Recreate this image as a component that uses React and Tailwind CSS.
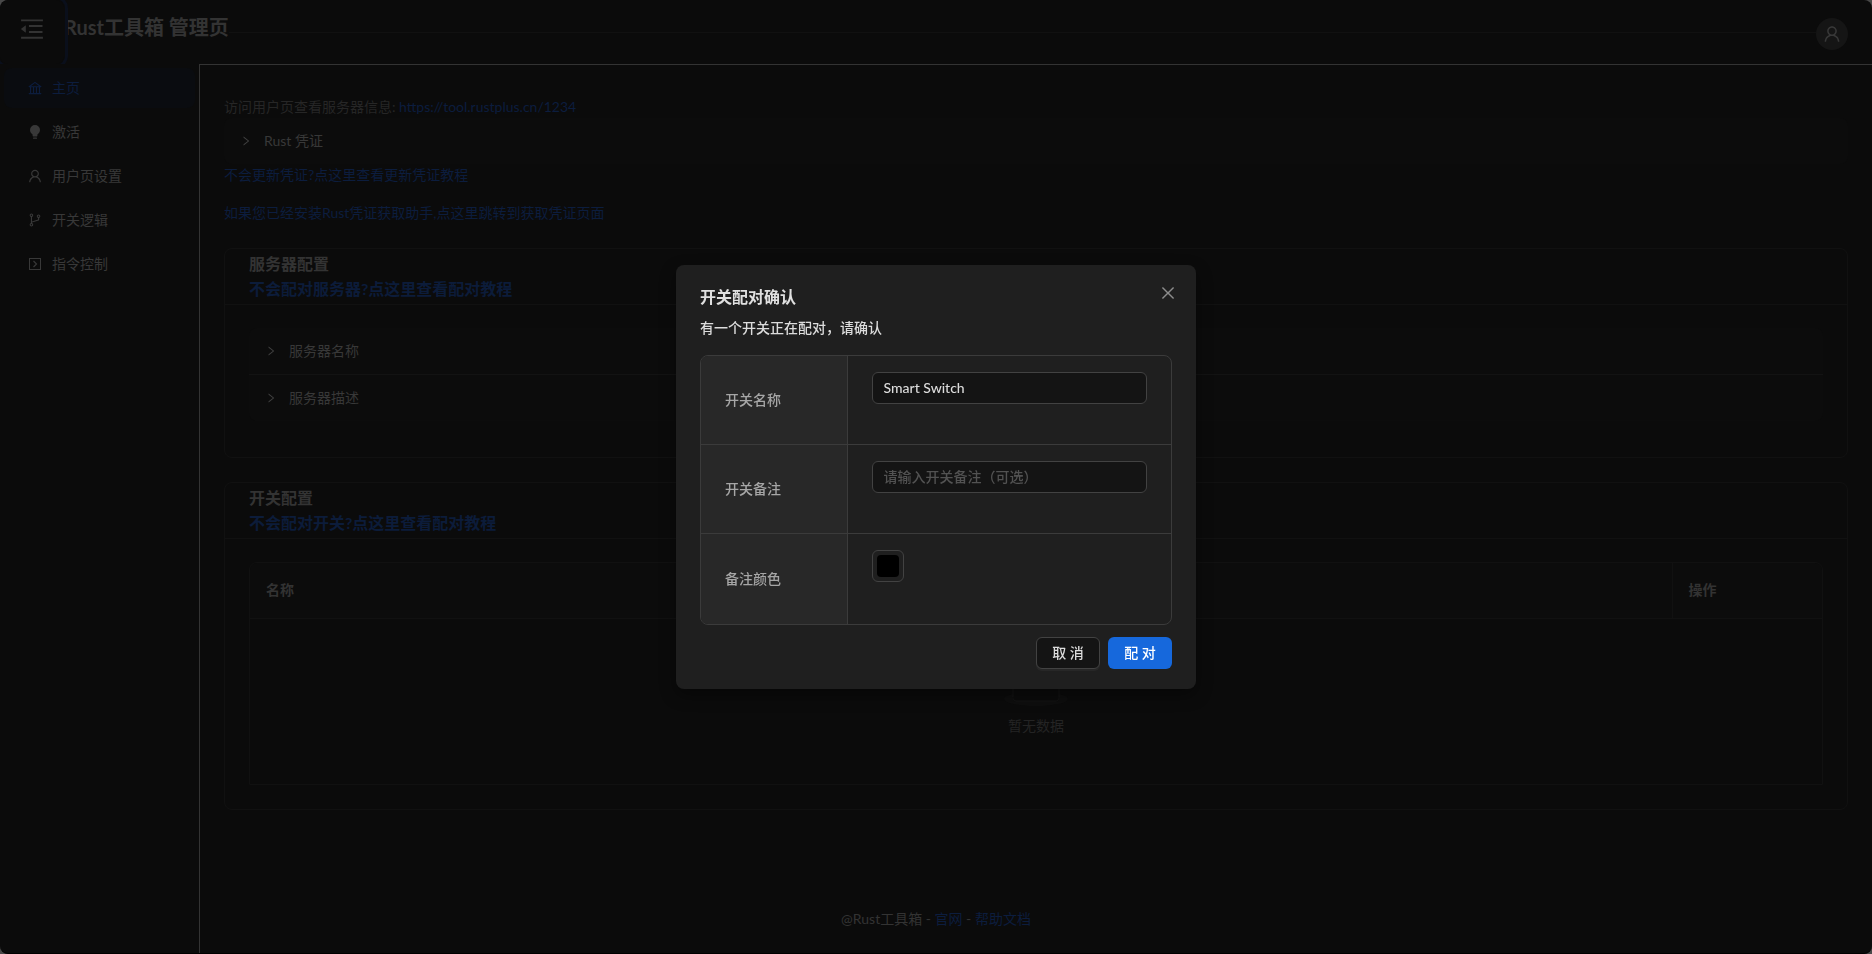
import React, { useState } from "react";
import { AiOutlineMenuFold, AiOutlineBank, AiOutlineUser, AiOutlineBranches, AiOutlineRight, AiOutlineClose } from "react-icons/ai";

const menuItems = [
  { key: "home", label: "主页", icon: <AiOutlineBank size={16} /> },
  { key: "active", label: "激活", icon: <BulbIcon /> },
  { key: "user", label: "用户页设置", icon: <AiOutlineUser size={16} /> },
  { key: "switch", label: "开关逻辑", icon: <AiOutlineBranches size={16} /> },
  { key: "command", label: "指令控制", icon: <CodeIcon /> },
];

function BulbIcon() {
  return (
    <svg width="16" height="16" viewBox="-1 -1 16 16" fill="currentColor">
      <path d="M7 0a5 5 0 0 0-5 5c0 1.900 1 3.400 2.600 4.400V11c0 .3.200.5.500.5h3.800c.3 0 .5-.2.500-.5V9.400C11 8.400 12 6.900 12 5a5 5 0 0 0-5-5z" />
      <rect x="5" y="12.600" width="4" height="1.200" rx=".5" />
    </svg>
  );
}

function CodeIcon() {
  return (
    <svg width="16" height="16" viewBox="0 0 16 16" fill="none" stroke="currentColor">
      <rect x="2.500" y="2.500" width="11" height="11" />
      <path d="M6.500 5 9.500 8l-3 3" strokeWidth="1.200" />
    </svg>
  );
}

function CollapseRow({ label }) {
  return (
    <button type="button" className="flex w-full items-center gap-3 px-4 py-3 text-left leading-[22px] text-[#383838]">
      <AiOutlineRight size={12} className="text-[#404040]" />
      <span>{label}</span>
    </button>
  );
}

function Card({ title, link, children, bodyClass }) {
  return (
    <section className="rounded-lg border border-[#111111]">
      <div className="-mb-px border-b border-[#111111] px-6 pt-[2px] pb-[3px] text-base leading-[25px] font-bold">
        <h2 className="text-[#333333]">{title}</h2>
        <a href="#" className="text-[#0c1c3a]">{link}</a>
      </div>
      <div className={bodyClass}>{children}</div>
    </section>
  );
}

function PairModal() {
  const [name, setName] = useState("Smart Switch");
  const [remark, setRemark] = useState("");
  const [color, setColor] = useState("#000000");

  const inputClass =
    "block h-8 w-full rounded-md border border-[#424242] bg-[#141414] px-[11px] pb-px text-[#dcdcdc] outline-none placeholder:text-[#525252]";
  const thClass = "w-[146px] border-r border-[#3b3b3b] bg-[#282828] px-6 text-left font-medium text-[#a6a6a6]";
  const tdClass = "px-6 py-4 align-top";

  return (
    <div className="fixed inset-0 flex items-center justify-center">
      <div role="dialog" aria-labelledby="pair-title" className="relative w-[520px] rounded-lg bg-[#1f1f1f] px-6 py-5 font-medium shadow-[0_6px_16px_rgba(0,0,0,0.4)]">
        <button type="button" aria-label="关闭" className="absolute top-[17px] right-[17px] flex size-[22px] items-center justify-center text-[#8c8c8c]">
          <AiOutlineClose size={18} />
        </button>
        <h2 id="pair-title" className="text-base leading-6 font-bold text-[#e0e0e0]">开关配对确认</h2>
        <p className="mt-2 leading-[22px] text-[#dcdcdc]">有一个开关正在配对，请确认</p>

        <div className="mt-4 overflow-hidden rounded-lg border border-[#3b3b3b]">
          <table className="w-full border-collapse">
            <tbody>
              <tr className="h-[88px] border-b border-[#3b3b3b]">
                <th className={thClass}><label htmlFor="switch-name">开关名称</label></th>
                <td className={tdClass}>
                  <input id="switch-name" className={inputClass} value={name} onChange={(e) => setName(e.target.value)} />
                </td>
              </tr>
              <tr className="h-[89px] border-b border-[#3b3b3b]">
                <th className={thClass}><label htmlFor="switch-remark">开关备注</label></th>
                <td className={tdClass}>
                  <input
                    id="switch-remark"
                    className={inputClass}
                    placeholder="请输入开关备注（可选）"
                    value={remark}
                    onChange={(e) => setRemark(e.target.value)}
                  />
                </td>
              </tr>
              <tr className="h-[91px]">
                <th className={thClass}><label htmlFor="switch-color">备注颜色</label></th>
                <td className={tdClass}>
                  <div className="size-8 rounded-md border border-[#424242] p-1">
                    <input
                      id="switch-color"
                      type="color"
                      value={color}
                      onChange={(e) => setColor(e.target.value)}
                      className="block size-full appearance-none overflow-hidden rounded bg-black p-0 [&::-webkit-color-swatch]:border-0 [&::-webkit-color-swatch-wrapper]:p-0"
                    />
                  </div>
                </td>
              </tr>
            </tbody>
          </table>
        </div>

        <div className="mt-3 flex justify-end gap-2">
          <button type="button" className="h-8 w-16 rounded-md border border-[#424242] bg-[#141414] text-[#dcdcdc] shadow-[0_2px_0_rgba(255,255,255,0.04)]">取 消</button>
          <button type="button" className="h-8 w-16 rounded-md bg-[#1668dc] text-white">配 对</button>
        </div>
      </div>
    </div>
  );
}

export default function App() {
  return (
    <div className="bg-[#484848] font-['Lato','Noto_Sans_CJK_SC',sans-serif] text-sm">
      <div className="flex min-h-screen flex-col rounded-lg border-b border-black bg-[#0b0b0b]">
        <header className="flex h-16 overflow-hidden rounded-tl-lg">
          <button
            type="button"
            aria-label="收起菜单"
            className="relative flex size-16 shrink-0 items-center justify-center rounded-lg bg-[#0b0b0b] pb-1.5 text-[#333333] outline-3 outline-offset-1 outline-[#0a0f1b]"
          >
            <AiOutlineMenuFold size={28} />
          </button>
          <div className="flex h-16 min-w-0 flex-1 items-center pr-6">
            <h1 className="pb-2.5 text-xl leading-7 font-bold text-[#333333]">Rust工具箱 管理页</h1>
            <div className="h-px flex-1 bg-[#111111]" />
            <button type="button" aria-label="用户" className="mt-1 flex size-8 items-center justify-center rounded-full bg-[#151515] text-[#383838]">
              <AiOutlineUser size={20} />
            </button>
          </div>
        </header>

        <div className="flex flex-1">
          <nav className="flex w-[199px] shrink-0 flex-col gap-1 p-1">
            {menuItems.map((item, i) => (
              <a
                key={item.key}
                href="#"
                className={
                  i === 0
                    ? "flex h-10 items-center gap-[9px] rounded-lg bg-[#0a0c10] pl-[23px] text-[#0c1d3e]"
                    : "flex h-10 items-center gap-[9px] rounded-lg pl-[23px] text-[#383838]"
                }
              >
                {item.icon}
                <span>{item.label}</span>
              </a>
            ))}
          </nav>

          <main className="flex min-w-0 flex-1 flex-col border-t border-l border-[#333333] px-6 pt-[31px]">
            <p className="leading-[22px] text-[#262626]">
              访问用户页查看服务器信息: <a href="#" className="text-[#0c1d3e]">https://tool.rustplus.cn/1234</a>
            </p>
            <div className="rounded-lg bg-[#0c0c0c]">
              <CollapseRow label="Rust 凭证" />
            </div>
            <a href="#" className="leading-[22px] text-[#0c1d3e]">不会更新凭证?点这里查看更新凭证教程</a>
            <a href="#" className="mt-4 leading-[22px] text-[#0c1d3e]">如果您已经安装Rust凭证获取助手,点这里跳转到获取凭证页面</a>

            <div className="mt-6 flex flex-col gap-6">
              <Card title="服务器配置" link="不会配对服务器?点这里查看配对教程" bodyClass="px-6 pt-6 pb-9">
                <div className="rounded-lg bg-[#0c0c0c]">
                  <CollapseRow label="服务器名称" />
                  <div className="h-px bg-[#131313]" />
                  <CollapseRow label="服务器描述" />
                </div>
              </Card>

              <Card title="开关配置" link="不会配对开关?点这里查看配对教程" bodyClass="p-6">
                <div className="overflow-hidden rounded-t-lg border border-[#111111]">
                  <table className="w-full border-collapse">
                    <thead>
                      <tr className="h-[55px] border-b border-[#111111] bg-[#0c0c0c] text-left text-[#333333]">
                        <th className="border-r border-[#111111] px-4 font-bold">名称</th>
                        <th className="w-[150px] px-4 font-bold">操作</th>
                      </tr>
                    </thead>
                    <tbody>
                      <tr>
                        <td colSpan={2} className="h-[166px] text-[#242424]">
                          <div className="flex flex-col items-center gap-2">
                            <svg width="64" height="41" viewBox="0 0 64 41" fill="none">
                              <ellipse cx="32" cy="33" rx="32" ry="7" fill="#0e0e0e" />
                              <path d="M55 12.800 44.900 1.300C44.400.5 43.700 0 42.900 0H21.100c-.8 0-1.500.5-2 1.300L9 12.800V22h46v-9.200z" stroke="#141414" />
                              <path d="M41.600 16c0-1.600 1-2.900 2.200-2.900H55v18.100c0 2.100-1.300 3.800-3 3.800H12c-1.600 0-3-1.700-3-3.800V13.100h11.200c1.200 0 2.200 1.300 2.200 2.900 0 1.600 1 2.900 2.200 2.900h14.800c1.200 0 2.200-1.300 2.200-2.900z" fill="#0b0b0b" stroke="#141414" />
                            </svg>
                            <span className="leading-[22px]">暂无数据</span>
                          </div>
                        </td>
                      </tr>
                    </tbody>
                  </table>
                </div>
              </Card>
            </div>

            {/* centered on the whole window, not on the content column */}
            <footer className="mt-auto mr-[200px] pt-6 pb-[23px] text-center leading-[22px] text-[#333333]">
              @Rust工具箱 - <a href="#" className="text-[#0c1d3e]">官网</a> - <a href="#" className="text-[#0c1d3e]">帮助文档</a>
            </footer>
          </main>
        </div>
      </div>

      <PairModal />
    </div>
  );
}
